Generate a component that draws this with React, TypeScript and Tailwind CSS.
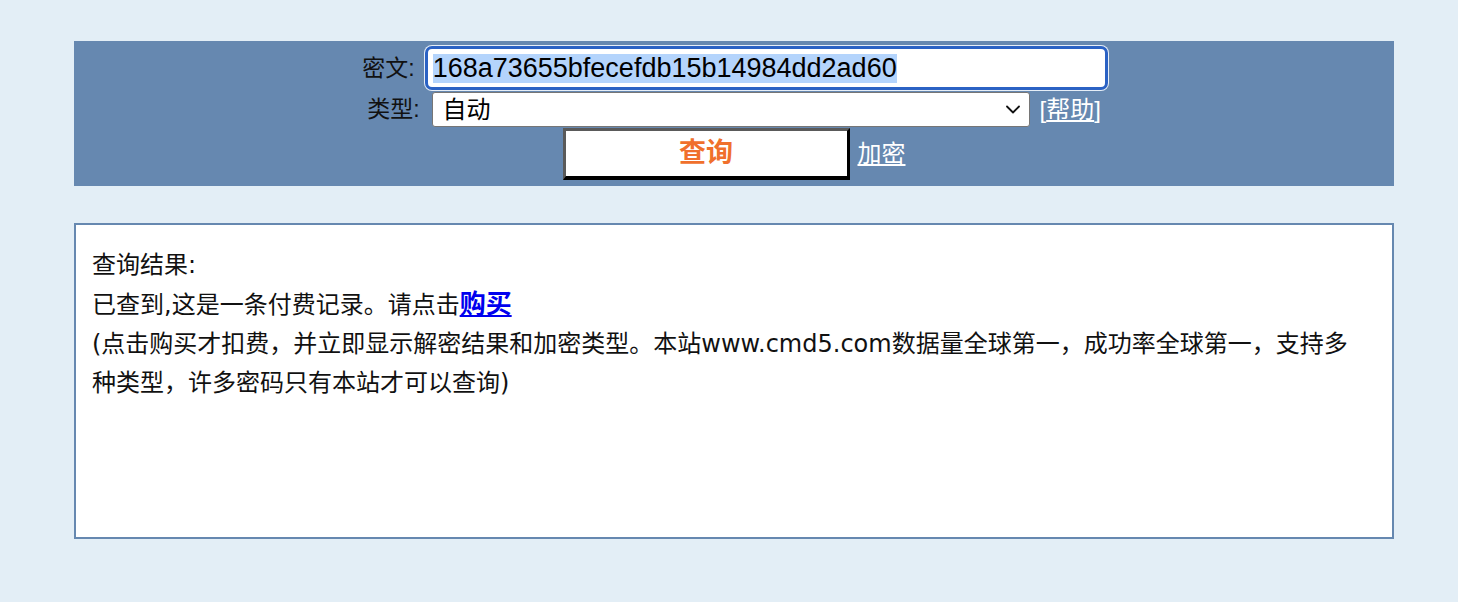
import React from "react";

const topFont = { fontFamily: '"Liberation Sans", "Noto Sans CJK SC", sans-serif' };
const boxFont = { fontFamily: '"DejaVu Sans", "Noto Sans CJK SC", sans-serif' };

export default function App() {
  return (
    <div className="min-h-screen w-full bg-[#e3eef6] pt-[41px]">
      <div
        className="ml-[74px] w-[1320px] h-[145px] bg-[#6688b0] flex flex-col items-center pt-[5px]"
        style={topFont}
      >
        {/* Row 1 */}
        <div className="flex items-center h-[44px] pl-[2px]">
          <span className="text-[23px] text-[#111] mr-[10px] leading-none">密文:</span>
          <div className="w-[683px] h-[44px] rounded-[7px] border-[3px] border-[#2b62c4] bg-white shadow-[0_0_0_1px_#e6eef7] flex items-center pl-[5px]">
            <span className="text-[27px] leading-[29px] text-black bg-[#b4d4fc]">
              168a73655bfecefdb15b14984dd2ad60
            </span>
          </div>
        </div>
        {/* Row 2 */}
        <div className="flex items-center h-[35px] mt-[2px]">
          <span className="text-[23px] text-[#111] mr-[12px] leading-none">类型:</span>
          <div className="w-[598px] h-[35px] rounded-[3px] border border-[#767676] bg-white flex items-center justify-between pl-[10px] pr-[9px]">
            <span className="text-[24px] leading-none text-black">自动</span>
            <svg width="14" height="9" viewBox="0 0 14 9" fill="none">
              <polyline points="1,1.5 7,7.5 13,1.5" stroke="#111" strokeWidth="1.8" strokeLinecap="round" strokeLinejoin="round" />
            </svg>
          </div>
          <span className="ml-[10px] text-[24px] leading-none text-white">
            [<a href="#" className="underline text-white">帮助</a>]
          </span>
        </div>
        {/* Row 3 */}
        <div className="flex items-center h-[52px] mt-[1px]">
          <button
            className="w-[287px] h-[52px] bg-white border-[3px] border-t-[#5a5a5a] border-l-[#5a5a5a] border-r-black border-b-[4px] border-b-black flex items-center justify-center"
          >
            <span className="text-[27px] font-bold leading-none text-[#f0702c]">查询</span>
          </button>
          <a href="#" className="ml-[8px] text-[24px] leading-none text-white underline">加密</a>
        </div>
      </div>

      <div
        className="ml-[74px] mt-[37px] w-[1320px] h-[316px] bg-white border-2 border-[#6688b0] pl-[16px] pr-[24px] pt-[21px] text-[24px] leading-[39px] text-[#111]"
        style={boxFont}
      >
        <div>查询结果:</div>
        <div>
          已查到,这是一条付费记录。请点击
          <a href="#" className="text-[26px] font-bold text-[#0000ee] underline">购买</a>
        </div>
        <div>
          (点击购买才扣费，并立即显示解密结果和加密类型。本站www.cmd5.com数据量全球第一，成功率全球第一，支持多种类型，许多密码只有本站才可以查询)
        </div>
      </div>
    </div>
  );
}
